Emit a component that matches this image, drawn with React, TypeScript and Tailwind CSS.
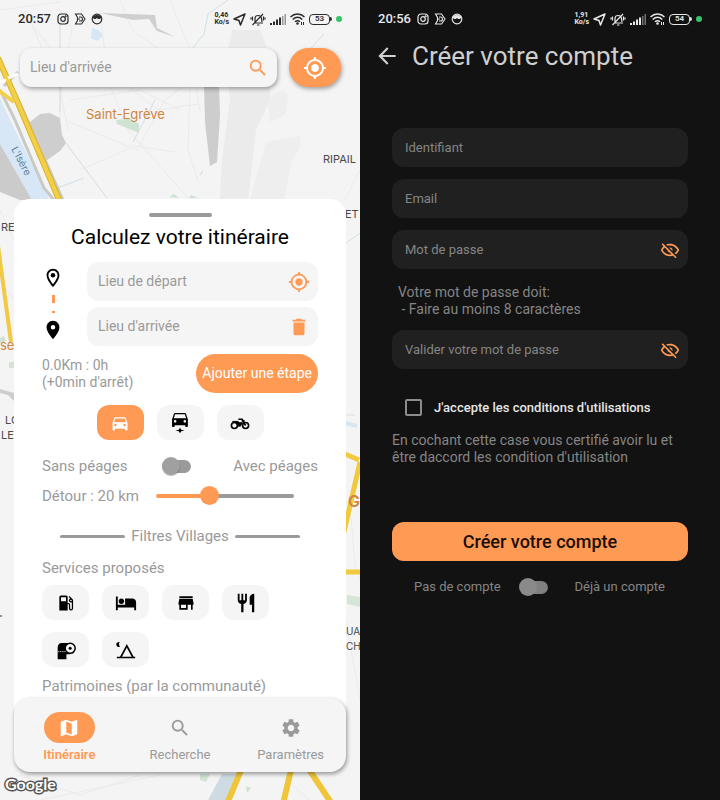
import React, { useState } from "react";
import {
  MdArrowBack,
  MdDelete,
  MdDirectionsCar,
  MdHotel,
  MdLocalGasStation,
  MdLocationOn,
  MdMyLocation,
  MdOutlineLocationOn,
  MdRestaurant,
  MdSearch,
  MdSettings,
  MdStore,
} from "react-icons/md";

function MapBackground() {
  return (
    <svg
      className="absolute inset-0 h-full w-full"
      viewBox="0 0 360 800"
      preserveAspectRatio="xMidYMid slice"
      aria-hidden="true"
    >
      <rect width="360" height="800" fill="#f4f4f4" />
      <path d="M232 30h28l10 25v45l-14 30-8 70h-28l2-40 8-60-4-40z" fill="#ebebeb" />
      <path d="M268 100q14-16 20-4l-2 18-16 8zM266 142l34-6q4 10-8 24l-8 40h-34l8-30z" fill="#eeeeee" />
      <g fill="none" stroke="#ebebeb">
        <path d="M30 20l30 70 8 40M58 8l14 20-12 70v20M100 10l8 70 20 50 60 68M20 10l40 50 60 20M0 10l60 -8" />
        <path d="M65 120l72 30 28-50 40-30M70 100l70-10 40 20M80 170l55-24 40 6M190 90l-2 60 10 30M108 70l50 40 40-6" />
        <path d="M170 0l20 50 10 60M120 0l12 30 70 50M345 200l15-30M346 500c10 20 4 60 14 80" />
        <path d="M0 210l14 30M0 280l14 20M20 775l60 20 60-20M40 800l120-25M280 775l30 25M310 773l20 27M346 620l14 80" />
      </g>
      <path d="M60 112v-90M65 142l42 56" fill="none" stroke="#dadada" />
      <g fill="none" stroke="#cfe0ea">
        <path d="M228 0l-20 14-4 20-16 20M155 100l-22 42M52 190l32-12M300 60l24-26M345 415h10M346 243l14-10" />
      </g>
      <path d="M92 28l7 2 4 6-6 5-6-3z" fill="#d5e7f4" />
      <path d="M100 13l55 2 2 13 18 9-18-6-8-12-16 1z" fill="#cfcfcf" />
      <path d="M204 84h15l1 31-3 47-7 4-5-44zM199 176l4-6-1 3z" fill="#cdcdcd" />
      <path d="M30 122l10-8 10-1 10 5 2 17 4 8-6 8-13 9-2 8-8-12-9-26z" fill="#cecece" />
      <path d="M116 120l14-2 9 6v9l-12-5-10-4zM169 197l5-3 5 4zM189 198l2-3 7 3z" fill="#cfe3d2" />
      <path d="M0 98l14 30 36 72H32L0 144z" fill="#d8e7f5" />
      <path d="M0 144l32 56H20l-20-8z" fill="#cbcbcb" />
      <path d="M0 64l20 40 43 96M0 90l14 28 30 70 10 12M4 86l14-14" fill="none" stroke="#c9c9c6" strokeWidth="3" />
      <path d="M-2 58l20 45 42 99" fill="none" stroke="#d9b52f" strokeWidth="6" />
      <path d="M-2 58l20 45 42 99M-2 90l16 12" fill="none" stroke="#f3cf48" strokeWidth="4" />
      <path d="M0 82l6-2M8 78l10-4" stroke="#ffffff" strokeWidth="3" />
      <path d="M-2 246l13 96" fill="none" stroke="#f0ca45" strokeWidth="4" />
      <path d="M9 362h5v6H9zM0 338l4-2 2 5-6 2z" fill="#d3e2d5" />
      <path d="M0 389l14 4v8l-6-6-8-2z" fill="#cdcdcd" />
      <path d="M0 616h2" stroke="#333333" />
      <path d="M345 423l12 3" fill="none" stroke="#d6e6f2" strokeWidth="4" />
      <path d="M345 454l14 6M360 462l-16 70M346 572h14" fill="none" stroke="#f0c93f" strokeWidth="5" />
      <path d="M347 595l13 2v10l-13-3z" fill="#d5e5d8" />
      <path d="M200 774h10l-4 8-6-2z" fill="#d3e2d5" />
      <path d="M222 774h14l-10 26h-18z" fill="#cfdbe3" />
      <path d="M246 786l5 2-4 5z" fill="#cfe3d2" />
      <path d="M241 770l-14 34M291 770l-8 34M308 768l24 36" fill="none" stroke="#efc63a" strokeWidth="6" />
      <g fontFamily="Inter, sans-serif" fontSize="11" fill="#4a4a4a">
        <text x="323" y="163">RIPAIL</text>
        <text x="345" y="218">ET</text>
        <text x="1" y="231">RE</text>
        <text x="5" y="424">LO</text>
        <text x="1" y="439">LE</text>
        <text x="346" y="635" fontSize="10">UA</text>
        <text x="346" y="650" fontSize="10">CH</text>
      </g>
      <g fontFamily="Inter, sans-serif" fill="#cf853e">
        <text x="86" y="119" fontSize="13">Saint-Egrève</text>
        <text x="0" y="350" fontSize="13">se</text>
        <text x="348" y="507" fontSize="16" fontWeight="600">G</text>
      </g>
      <text x="11" y="149" fontSize="10" fill="#5e7f9c" fontFamily="Inter, sans-serif" transform="rotate(62 11 149)">
        L'Isère
      </text>
    </svg>
  );
}

function StatusBar({ time, rate, battery, dark = false }: { time: string; rate: string; battery: string; dark?: boolean }) {
  return (
    <div className={`flex h-[38px] items-center justify-between pl-[18px] pr-[18px] ${dark ? "text-[#e8e8e8]" : "text-[#2b2b2b]"}`}>
      <div className="flex items-center gap-[5px]">
        <span className="mr-px text-[13px] font-medium">{time}</span>
        <svg className="size-3" viewBox="0 0 12 12" fill="none" stroke="currentColor" strokeWidth="1.2">
          <rect x="1" y="1" width="10" height="10" rx="3" />
          <circle cx="6" cy="6" r="2.3" />
          <circle cx="8.7" cy="3.3" r=".4" />
        </svg>
        <svg className="size-3" viewBox="0 0 12 12" fill="none" stroke="currentColor" strokeWidth="1.1">
          <path d="M1.5 1h6l3.5 5-3.5 5h-6l2-3.5v-3zM5 4h1.5a2 2 0 0 1 0 4H5M4 6h2" />
        </svg>
        <svg className="size-3" viewBox="0 0 12 12" fill="none" stroke="currentColor" strokeWidth="1.2">
          <circle cx="6" cy="6" r="4.8" />
          <path d="M2 4.5C3 2 9 2 10 4.5L8 5.5 6 4.5 4 5.5z" fill="currentColor" />
        </svg>
      </div>
      <div className="flex items-center gap-1">
        <div className="text-[7px] font-bold leading-[7px]">
          <div>{rate}</div>
          <div>Ko/s</div>
        </div>
        <svg className="size-[13px]" viewBox="0 0 13 13" fill="none" stroke="currentColor" strokeWidth="1.5" strokeLinejoin="round">
          <path d="M12 1L1 6l5 1.5L7.5 12z" />
        </svg>
        <svg className="h-[13px] w-4" viewBox="0 0 16 13" fill="none" stroke="currentColor" strokeWidth="1.2">
          <path d="M4 10h9M5 9.5V5.5C5 3.5 6.5 2.5 8 2.5s3.5 1 3.5 3.5l.5 3M2.5 12L13 1M7 12h2.5M2.5 3.5v4M1 4.5v2M13.5 3.5v4M15 4.5v2" />
        </svg>
        <svg className="h-[11px] w-4" viewBox="0 0 16 11" fill="currentColor">
          <path d="M0 9h2v2H0zM3 7.5h2V11H3zM6 5.5h2V11H6zM9 3.5h2V11H9z" />
          <path d="M12 2h1.5v9H12zM14.5 0H16v11h-1.5z" opacity=".45" />
        </svg>
        <svg className="h-3 w-[15px]" viewBox="0 0 15 12" fill="none" stroke="currentColor" strokeWidth="1.5">
          <path d="M.5 4c4-4 10-4 14 0M2.7 6.5c3-2.8 6.6-2.8 9.6 0M5 8.8c1.7-1.5 3.3-1.5 5 0" />
          <circle cx="7.5" cy="10.5" r=".6" fill="currentColor" />
          <path d="M11.5 9v3M13.5 9v3" strokeWidth="1" />
        </svg>
        <span className="flex items-center">
          <span className="flex h-[11px] w-[21px] items-center justify-center rounded-[4px] border border-current text-[8px] font-semibold leading-none">
            {battery}
          </span>
          <span className="h-1 w-[2px] rounded-r-sm bg-current" />
        </span>
        <span className="size-[6px] rounded-full bg-[#35c468]" />
      </div>
    </div>
  );
}

function Switch({ label, dark = false }: { label: string; dark?: boolean }) {
  return (
    <input
      type="checkbox"
      role="switch"
      aria-label={label}
      className={`relative mr-2 flex h-[18px] w-[29px] shrink-0 appearance-none items-center before:ml-1 before:h-[13px] before:w-[25px] before:rounded-full after:absolute after:left-0 after:size-[18px] after:rounded-full checked:after:left-[11px] ${
        dark
          ? "before:bg-[#808080] after:bg-[#8a8a8a]"
          : "before:bg-[#9a9a9a] after:bg-[#a0a0a0] after:shadow-[0_1px_1px_rgba(0,0,0,0.3)]"
      }`}
    />
  );
}

const svg = "size-5";

function CarStopIcon() {
  return (
    <svg className="size-6" viewBox="0 0 24 24" fill="currentColor">
      <path
        transform="translate(1.4 -2.4) scale(.88)"
        fillRule="evenodd"
        d="M18.92 6.01C18.72 5.42 18.16 5 17.5 5h-11c-.66 0-1.21.42-1.42 1.01L3 12v8c0 .55.45 1 1 1h1c.55 0 1-.45 1-1v-1h12v1c0 .55.45 1 1 1h1c.55 0 1-.45 1-1v-8zM6.5 16a1.5 1.5 0 1 1 0-3 1.5 1.5 0 0 1 0 3zm11 0a1.5 1.5 0 1 1 0-3 1.5 1.5 0 0 1 0 3zM5 11l1.5-4.5h11L19 11z"
      />
      <path d="M7.5 19.5l3.3-.8 1.2-1.9 1.2 1.9 3.3.8-3.3.8-1.2 1.9-1.2-1.9z" />
    </svg>
  );
}

function MotorbikeIcon() {
  return (
    <svg className={svg} viewBox="0 0 24 24" fill="none" stroke="currentColor" strokeWidth="2">
      <circle cx="5.3" cy="15" r="3.6" />
      <circle cx="18.7" cy="15" r="3.6" />
      <path d="M10 7.5h4.5L18.7 15M14 9.5h3.5" />
      <path d="M3 10h6.5l2 1.5h3.5L12.5 16H9.5C9 13 7 11.5 4 11z" fill="currentColor" strokeWidth=".8" />
    </svg>
  );
}

function PaperRollIcon() {
  return (
    <svg className={svg} viewBox="0 0 24 24">
      <path d="M7 3.5h10V17h-4.500v6H2V9C2 6 4 3.500 7 3.500z" fill="currentColor" />
      <circle cx="17" cy="10" r="6" fill="#f5f5f5" stroke="currentColor" strokeWidth="1.8" />
      <circle cx="17" cy="10" r="1.8" fill="currentColor" />
      <path d="M2.5 14h9.500" stroke="#f5f5f5" strokeDasharray="1.5 1" />
    </svg>
  );
}

function TentIcon() {
  return (
    <svg className={svg} viewBox="0 0 24 24" fill="none" stroke="currentColor" strokeWidth="2">
      <path d="M1 21h22M5.5 21L13 7l7.5 14" />
      <path d="M4.5 2.5A3 3 0 1 0 5 7.800 4 4 0 0 1 4.500 2.500z" fill="currentColor" stroke="none" />
    </svg>
  );
}

function MapIcon() {
  return (
    <svg className="size-[22px]" viewBox="0 0 24 24" fill="currentColor">
      <path
        fillRule="evenodd"
        d="M15 19l-6-2.11V5l6 2.11zM20.5 3l-.16.03L15 5.1 9 3 3.36 4.9A.5.5 0 0 0 3 5.38V20.5a.5.5 0 0 0 .66.47L9 18.9l6 2.1 5.64-1.9a.5.5 0 0 0 .36-.48V3.5a.5.5 0 0 0-.5-.5z"
      />
    </svg>
  );
}

function EyeOffIcon() {
  return (
    <svg className={svg} viewBox="0 0 24 24" fill="currentColor">
      <path d="M2,5.27L3.28,4L20,20.72L18.73,22L15.65,18.92C14.5,19.3 13.28,19.5 12,19.5C7,19.5 2.73,16.39 1,12C1.69,10.24 2.79,8.69 4.19,7.46L2,5.27M12,9A3,3 0 0,1 15,12C15,12.35 14.94,12.69 14.83,13L11,9.17C11.31,9.06 11.65,9 12,9M12,4.5C17,4.5 21.27,7.61 23,12C22.18,14.08 20.79,15.88 19,17.19L17.58,15.76C18.94,14.82 20.06,13.54 20.82,12C19.17,8.64 15.76,6.5 12,6.5C10.91,6.5 9.84,6.68 8.84,7L7.3,5.47C8.74,4.85 10.33,4.5 12,4.5M3.18,12C4.83,15.36 8.24,17.5 12,17.5C12.69,17.5 13.37,17.43 14,17.29L11.72,15C10.29,14.85 9.15,13.71 9,12.28L5.6,8.87C4.61,9.72 3.78,10.78 3.18,12Z" />
    </svg>
  );
}

const services = [
  { name: "Station-service", icon: <MdLocalGasStation className={svg} /> },
  { name: "Hébergement", icon: <MdHotel className="size-[22px]" /> },
  { name: "Commerce", icon: <MdStore className={svg} /> },
  { name: "Restaurant", icon: <MdRestaurant className="size-[22px]" /> },
  { name: "Toilettes", icon: <PaperRollIcon /> },
  { name: "Camping", icon: <TentIcon /> },
];

const tile = "flex h-[35px] w-[47px] items-center justify-center rounded-xl";

function StepField({ label, icon, action }: { label: string; icon: React.ReactNode; action: string }) {
  return (
    <div className="flex h-[39px] items-center rounded-xl bg-[#f5f5f5] pl-[11px] pr-2">
      <input
        type="text"
        aria-label={label}
        placeholder={label}
        className="min-w-0 flex-1 bg-transparent text-[14px] outline-none placeholder:text-[#9a9a9a]"
      />
      <button type="button" aria-label={action} className="text-[#ff9a55]">
        {icon}
      </button>
    </div>
  );
}

function RouteScreen() {
  const [detour, setDetour] = useState(20);
  return (
    <section className="relative flex min-h-screen flex-col overflow-hidden bg-[#f4f4f4]">
      <MapBackground />
      <div className="relative flex flex-1 flex-col">
        <StatusBar time="20:57" rate="0,46" battery="53" />
        <div className="mt-[10px] flex gap-3 pl-5 pr-[19px]">
          <div className="flex h-[39px] flex-1 items-center rounded-xl bg-[#f5f5f5] pl-[10px] pr-2 shadow-[1px_2px_4px_rgba(0,0,0,0.35)]">
            <input
              type="text"
              aria-label="Lieu d'arrivée"
              placeholder="Lieu d'arrivée"
              className="min-w-0 flex-1 bg-transparent text-[14px] outline-none placeholder:text-[#9a9a9a]"
            />
            <button type="button" aria-label="Rechercher" className="text-[#ff9a55]">
              <MdSearch className="size-[22px]" />
            </button>
          </div>
          <button
            type="button"
            aria-label="Ma position"
            className="flex h-[39px] w-[52px] items-center justify-center rounded-full bg-[#ff9a55] text-white shadow-[1px_2px_4px_rgba(0,0,0,0.35)]"
          >
            <MdMyLocation className="size-6" />
          </button>
        </div>

        <div className="mx-[14px] mt-[112px] flex flex-1 flex-col rounded-t-2xl bg-white px-7 pt-[14px] text-[15px] text-[#9a9a9a]">
          <div className="h-1 w-[63px] self-center rounded-full bg-[#9a9a9a]" />
          <h1 className="mt-1 text-center text-[21px] leading-8 text-black">Calculez votre itinéraire</h1>

          <div className="mt-[9px] flex gap-[23px]">
            <div className="flex w-[22px] flex-col items-center pt-[5px] text-black">
              <MdOutlineLocationOn className="size-[22px]" />
              <span className="mt-[6px] h-2 w-[3px] bg-[#ff9a55]" />
              <span className="mt-2 h-[2px] w-[3px] bg-[#ff9a55]" />
              <MdLocationOn className="mt-[6px] size-[22px]" />
            </div>
            <div className="flex flex-1 flex-col gap-[6px]">
              <StepField label="Lieu de départ" action="Utiliser ma position" icon={<MdMyLocation className="size-[22px]" />} />
              <StepField label="Lieu d'arrivée" action="Supprimer l'étape" icon={<MdDelete className="size-[22px]" />} />
            </div>
          </div>

          <div className="mt-2 flex items-center justify-between">
            <p className="text-[14px] leading-[17px]">
              0.0Km : 0h
              <br />
              (+0min d'arrêt)
            </p>
            <button type="button" className="h-[39px] rounded-full bg-[#ff9a55] px-[6px] text-[14px] text-white">
              Ajouter une étape
            </button>
          </div>

          <div className="mt-3 flex justify-center gap-[13px]">
            <button type="button" aria-label="Voiture" aria-pressed="true" className={`${tile} bg-[#ff9a55] text-white`}>
              <MdDirectionsCar className={svg} />
            </button>
            <button type="button" aria-label="Voiture avec arrêts" className={`${tile} bg-[#f5f5f5] text-black`}>
              <CarStopIcon />
            </button>
            <button type="button" aria-label="Moto" className={`${tile} bg-[#f5f5f5] text-black`}>
              <MotorbikeIcon />
            </button>
          </div>

          <div className="mt-[15px] flex items-center justify-between leading-[22px]">
            <span className="w-24">Sans péages</span>
            <Switch label="Avec péages" />
            <span className="w-24 text-right">Avec péages</span>
          </div>

          <div className="mt-2 flex items-center gap-3 leading-[22px]">
            <label htmlFor="detour" className="min-w-[102px] whitespace-nowrap">
              Détour : {detour} km
            </label>
            <input
              id="detour"
              type="range"
              min="0"
              max="54"
              value={detour}
              onChange={(e) => setDetour(Number(e.target.value))}
              className="mr-6 h-[19px] min-w-0 flex-1 appearance-none bg-transparent [&::-webkit-slider-runnable-track]:h-1 [&::-webkit-slider-runnable-track]:rounded-full [&::-webkit-slider-runnable-track]:bg-[linear-gradient(to_right,#ff9a55_38%,#9a9a9a_38%)] [&::-webkit-slider-thumb]:-mt-2 [&::-webkit-slider-thumb]:size-[19px] [&::-webkit-slider-thumb]:appearance-none [&::-webkit-slider-thumb]:rounded-full [&::-webkit-slider-thumb]:bg-[#ff9a55]"
            />
          </div>

          <div className="mt-[18px] flex items-center gap-[6px] px-[18px] leading-[22px]">
            <span className="h-[3px] flex-1 rounded-full bg-[#9a9a9a]" />
            <h2>Filtres Villages</h2>
            <span className="h-[3px] flex-1 rounded-full bg-[#9a9a9a]" />
          </div>

          <h3 className="mt-[10px] leading-[22px]">Services proposés</h3>
          <div className="mt-[6px] flex flex-wrap gap-x-[13px] gap-y-3">
            {services.map((s) => (
              <button key={s.name} type="button" aria-label={s.name} className={`${tile} bg-[#f5f5f5] text-black`}>
                {s.icon}
              </button>
            ))}
          </div>
          <h3 className="mb-3 mt-2 leading-[22px]">Patrimoines (par la communauté)</h3>
        </div>

        <nav className="relative z-10 mx-[14px] -mt-3 grid h-[74px] grid-cols-3 rounded-2xl bg-[#f5f5f5] text-[13px] text-[#9a9a9a] shadow-[1px_2px_4px_rgba(0,0,0,0.4)]">
          <a href="#itineraire" className="flex flex-col items-center pt-[14px] font-semibold text-[#ff9a55]">
            <span className="flex h-[31px] w-[51px] items-center justify-center rounded-full bg-[#ff9a55] text-white">
              <MapIcon />
            </span>
            <span className="mt-[2px] leading-5">Itinéraire</span>
          </a>
          <a href="#recherche" className="flex flex-col items-center pt-[14px]">
            <span className="flex h-[31px] items-center">
              <MdSearch className="size-[22px]" />
            </span>
            <span className="mt-[2px] leading-5">Recherche</span>
          </a>
          <a href="#parametres" className="flex flex-col items-center pt-[14px]">
            <span className="flex h-[31px] items-center">
              <MdSettings className="size-[22px]" />
            </span>
            <span className="mt-[2px] leading-5">Paramètres</span>
          </a>
        </nav>
        <div className="h-7 pl-[5px]">
          <span className="font-['Lato'] text-[16px] font-bold leading-6 text-white [paint-order:stroke_fill] [-webkit-text-stroke:3px_#555555]">
            Google
          </span>
        </div>
      </div>
    </section>
  );
}

function AccountField({ label, type = "text" }: { label: string; type?: string }) {
  return (
    <div className="flex h-[39px] items-center rounded-xl bg-[#202020] pl-[13px] pr-2">
      <input
        type={type}
        aria-label={label}
        placeholder={label}
        className="min-w-0 flex-1 bg-transparent text-[13px] text-white outline-none placeholder:text-[#858585]"
      />
      {type === "password" && (
        <button type="button" aria-label="Afficher le mot de passe" className="text-[#ff9a55]">
          <EyeOffIcon />
        </button>
      )}
    </div>
  );
}

function SignUpScreen() {
  return (
    <section className="flex min-h-screen flex-col bg-[#121212] text-[14px] text-[#858585]">
      <StatusBar time="20:56" rate="1,91" battery="54" dark />
      <header className="flex h-9 items-center gap-3 pl-[14px] text-[#cfcfcf]">
        <button type="button" aria-label="Retour">
          <MdArrowBack className="size-[26px]" />
        </button>
        <h1 className="text-[26px] leading-9">Créer votre compte</h1>
      </header>
      <form className="mt-[54px] flex flex-col px-8">
        <div className="flex flex-col gap-3">
          <AccountField label="Identifiant" />
          <AccountField label="Email" />
          <AccountField label="Mot de passe" type="password" />
        </div>
        <p className="mt-[15px] whitespace-pre pl-[6px] leading-[17px]">{"Votre mot de passe doit:\n - Faire au moins 8 caractères"}</p>
        <div className="mt-3">
          <AccountField label="Valider votre mot de passe" type="password" />
        </div>
        <div className="mt-[30px] flex items-center gap-3 pl-[13px]">
          <input id="terms" type="checkbox" className="size-[17px] appearance-none rounded-[2px] border-2 border-[#8c8c8c] checked:bg-[#ff9a55]" />
          <label htmlFor="terms" className="text-[13px] font-medium leading-[17px] text-[#e6e6e6]">
            J'accepte les conditions d'utilisations
          </label>
        </div>
        <p className="mt-4 leading-[17px]">En cochant cette case vous certifié avoir lu et être daccord les condition d'utilisation</p>
        <button type="submit" className="mt-14 h-[39px] rounded-xl bg-[#ff9a55] text-[18px] font-medium text-[#1a0d05]">
          Créer votre compte
        </button>
        <div className="mt-4 flex items-center justify-between pl-[22px] pr-[23px] text-[13px] leading-5">
          <span>Pas de compte</span>
          <Switch label="Déjà un compte" dark />
          <span>Déjà un compte</span>
        </div>
      </form>
    </section>
  );
}

export default function App() {
  return (
    <main className="grid grid-cols-2 font-[Roboto,sans-serif]">
      <RouteScreen />
      <SignUpScreen />
    </main>
  );
}
